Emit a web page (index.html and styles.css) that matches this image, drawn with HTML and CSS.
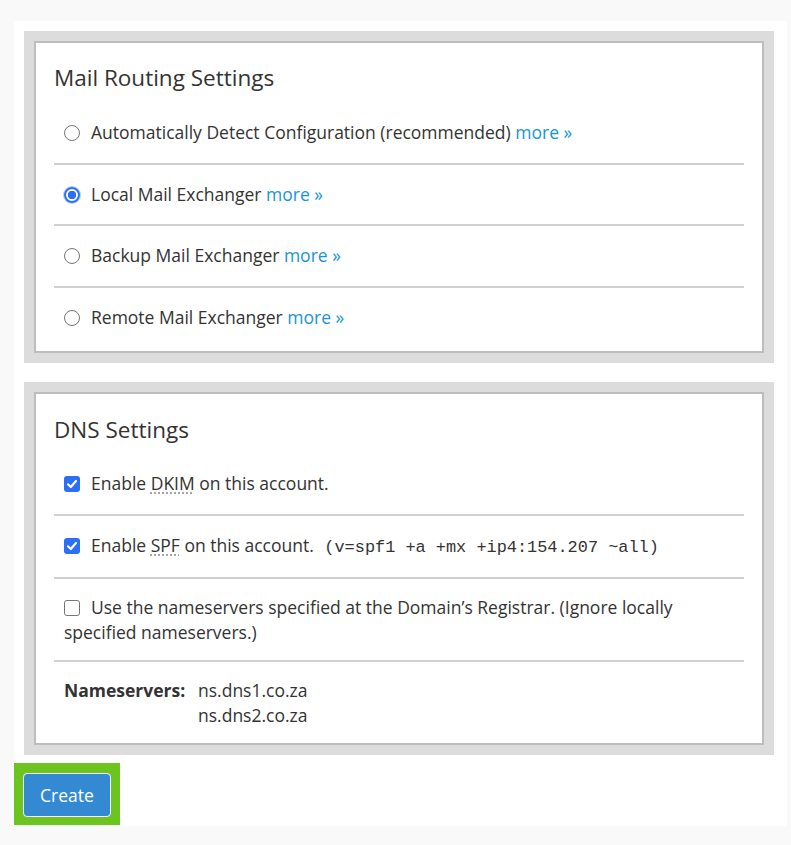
FILE: index.html
```html
<!DOCTYPE html>
<html>
<head>
<meta charset="utf-8">
<link rel="stylesheet" href="styles.css">
</head>
<body>
<div class="panel">
  <div class="frame">
    <div class="box mail">
      <h2 class="title">Mail Routing Settings</h2>
      <div class="row"><span class="radio"></span>Automatically Detect Configuration (recommended) <a class="more">more »</a></div>
      <div class="row"><span class="radio on"></span>Local Mail Exchanger <a class="more">more »</a></div>
      <div class="row"><span class="radio"></span>Backup Mail Exchanger <a class="more">more »</a></div>
      <div class="row"><span class="radio"></span>Remote Mail Exchanger <a class="more">more »</a></div>
    </div>
  </div>
  <div class="frame">
    <div class="box">
      <h2 class="title">DNS Settings</h2>
      <div class="row"><span class="check on"><svg viewBox="0 0 16 16" width="16" height="16"><path d="M4 8.3 L6.8 11 L12 5" fill="none" stroke="#fff" stroke-width="2.2" stroke-linecap="round" stroke-linejoin="round"/></svg></span>Enable <abbr>DKIM</abbr> on this account.</div>
      <div class="row"><span class="check on"><svg viewBox="0 0 16 16" width="16" height="16"><path d="M4 8.3 L6.8 11 L12 5" fill="none" stroke="#fff" stroke-width="2.2" stroke-linecap="round" stroke-linejoin="round"/></svg></span>Enable <abbr>SPF</abbr> on this account. <code class="spf">(v=spf1 +a +mx +ip4:154.207 ~all)</code></div>
      <div class="row wrap"><span class="check"></span>Use the nameservers specified at the Domain’s Registrar. (Ignore locally specified nameservers.)</div>
      <div class="row ns">
        <span class="ns-label">Nameservers:</span>
        <span class="ns-list"><span>ns.dns1.co.za</span><span>ns.dns2.co.za</span></span>
      </div>
    </div>
  </div>
  <div class="actions">
    <div class="highlight"><button class="btn">Create</button></div>
  </div>
</div>
</body>
</html>
```

FILE: styles.css
```css
html, body {
  margin: 0;
  padding: 0;
  background: #f9f9f9;
}
body {
  padding: 21px 0 0 14px;
  font-family: "Open Sans", "Liberation Sans", sans-serif;
  color: #333;
}
.panel {
  width: 773px;
  height: 805px;
  background: #fff;
  padding: 10px 0 0 10px;
  box-sizing: border-box;
}
.frame {
  width: 750px;
  background: #dcdcdc;
  padding: 10px;
  box-sizing: border-box;
  margin-bottom: 19px;
}
.box {
  background: #fff;
  border: 2px solid #bdbdbd;
  padding: 21px 18px 4px;
}
.box.mail {
  padding: 20px 18px 4px;
}
.title {
  margin: 0 0 10px;
  font-size: 22.5px;
  line-height: 30px;
  font-weight: 400;
  color: #333;
}
.row {
  font-size: 17.5px;
  line-height: 25px;
  padding: 17px 0 17.5px 10px;
  border-top: 2px solid #d0d0d0;
}
.title + .row {
  border-top: none;
}
.box:not(.mail) .title {
  margin-bottom: 9px;
}
.row.wrap {
  padding: 15.5px 0 15.5px 10px;
}
.more {
  color: #1795d6;
  text-decoration: none;
}
.radio, .check {
  display: inline-block;
  width: 16px;
  height: 16px;
  box-sizing: border-box;
  vertical-align: -2px;
  margin-right: 11px;
}
.radio {
  border: 1.5px solid #767676;
  border-radius: 50%;
}
.radio.on {
  border: 2px solid #2a6ff5;
  background: radial-gradient(circle, #2a6ff5 0 4px, #fff 4.5px);
  box-shadow: 0 0 0 1px #b9cffb;
}
.check {
  border: 1.5px solid #767676;
  border-radius: 3px;
}
.check.on {
  border: none;
  background: #2a6ff5;
}
.check svg {
  display: block;
}
abbr {
  text-decoration: underline dotted #999;
  text-underline-offset: 3px;
}
.spf {
  font-family: "Liberation Mono", monospace;
  font-size: 16.9px;
  margin-left: 6px;
}
.row.ns {
  display: flex;
  padding: 16px 0 11px 10px;
}
.ns-label {
  font-weight: 700;
  width: 134px;
}
.ns-list {
  display: flex;
  flex-direction: column;
}
.actions {
  margin-top: -11px;
  margin-left: -10px;
}
.highlight {
  display: inline-block;
  background: #6cc51e;
  padding: 10px 9px 8px 9px;
}
.btn {
  display: block;
  width: 88px;
  height: 44px;
  background: #338ad3;
  color: #fff;
  border: 1px solid #fff;
  border-radius: 4px;
  font-family: "Open Sans", "Liberation Sans", sans-serif;
  font-size: 17.5px;
}
```
